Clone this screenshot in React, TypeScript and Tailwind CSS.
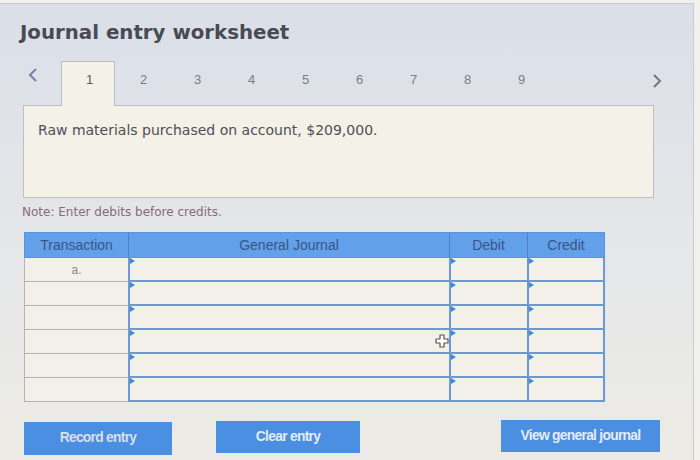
import React from 'react';

const tabs = [1, 2, 3, 4, 5, 6, 7, 8, 9];
const rows = ['a.', '', '', '', '', ''];

function Marker() {
  return (
    <span className="absolute left-0 top-0 w-0 h-0 border-t-[3px] border-b-[3px] border-l-[5px] border-t-transparent border-b-transparent border-l-[#4b82d6]" />
  );
}

function MoveCursor() {
  return (
    <svg className="absolute left-[-16px] top-[4px]" width="14" height="14" viewBox="0 0 14 14">
      <path
        d="M5 1h4v4h4v4H9v4H5V9H1V5h4z"
        fill="#ffffff"
        stroke="#555"
        strokeWidth="1.2"
        strokeLinejoin="round"
      />
    </svg>
  );
}

export default function App() {
  return (
    <div className="w-[700px] h-[460px] overflow-hidden flex bg-[#f1f0eb]" style={{ fontFamily: '"DejaVu Sans", Verdana, sans-serif' }}>
      <div className="flex-1 mt-[3px] border-t border-r border-[#c8ccd2] bg-gradient-to-b from-[#dadfe8] via-[#e5e6e9] to-[#ecebe5] flex flex-col">
        {/* Title */}
        <h1 className="pl-[20px] pt-[17px] text-[19.8px] font-bold text-[#4a4a54] leading-[24px]">
          Journal entry worksheet
        </h1>

        {/* Tabs */}
        <div className="mt-[16px] flex items-start h-[44px] pl-[28px] pr-[31px]" style={{ fontFamily: '"Liberation Sans", Arial, sans-serif' }}>
          <span className="w-[33px] pt-[6px] text-[#7a7fae]">
            <svg width="10" height="16" viewBox="0 0 10 16">
              <path d="M8 2L2 8l6 6" fill="none" stroke="currentColor" strokeWidth="2" />
            </svg>
          </span>
          {tabs.map((n) => (
            <div
              key={n}
              className={
                n === 1
                  ? 'w-[54px] h-[45px] bg-[#f3f1e8] border border-b-0 border-[#bdbdbd] text-center pt-[8px] pl-[3px] text-[13px] text-[#5a5a5a] relative z-10'
                  : 'w-[54px] h-[44px] text-center pt-[9px] pl-[3px] text-[13px] text-[#7d7d7d]'
              }
            >
              {n}
            </div>
          ))}
          <span className="ml-auto pt-[12px] text-[#777]">
            <svg width="10" height="16" viewBox="0 0 10 16">
              <path d="M2 2l6 6-6 6" fill="none" stroke="currentColor" strokeWidth="2" />
            </svg>
          </span>
        </div>

        {/* Question */}
        <div className="ml-[23px] w-[631px] h-[93px] bg-[#f3f1e8] border border-[#bfbfbf] px-[14px] pt-[14px] text-[14px] text-[#4f4f55]">
          Raw materials purchased on account, $209,000.
        </div>

        <p className="ml-[22px] mt-[5px] text-[12px] text-[#8a6c72]">Note: Enter debits before credits.</p>

        {/* Table */}
        <div className="ml-[24px] mt-[11px] w-[581px]" style={{ fontFamily: '"Liberation Sans", Arial, sans-serif' }}>
          <div className="flex h-[26px] bg-[#62a0ea] text-[14px] text-[#3a5584] border border-[#5b93dc]">
            <div className="w-[104px] flex items-center justify-center border-r border-[#4f7fc4]">Transaction</div>
            <div className="w-[321px] flex items-center justify-center border-r border-[#4f7fc4]">General Journal</div>
            <div className="w-[78px] flex items-center justify-center border-r border-[#4f7fc4]">Debit</div>
            <div className="flex-1 flex items-center justify-center">Credit</div>
          </div>
          {rows.map((t, i) => (
            <div key={i} className="flex h-[24px] bg-[#f2f0e8]">
              <div className="w-[104px] flex items-center justify-center border-l border-b border-[#b3b3b3] text-[12px] text-[#8a8a8a]">
                {t}
              </div>
              <div className="w-[321px] relative border-l-2 border-b-2 border-[#6a98d8]">
                <Marker />
              </div>
              <div className="w-[78px] relative border-l-2 border-b-2 border-[#6a98d8]">
                <Marker />
                {i === 3 && <MoveCursor />}
              </div>
              <div className="flex-1 relative border-l-2 border-r-2 border-b-2 border-[#6a98d8]">
                <Marker />
              </div>
            </div>
          ))}
        </div>

        {/* Buttons */}
        <div className="mt-auto mb-[6px] flex items-end pl-[24px] text-[13.8px] font-bold tracking-[-0.7px] text-[#e6ebf5]" style={{ fontFamily: '"Liberation Sans", Arial, sans-serif' }}>
          <button className="w-[148px] h-[33px] bg-[#4a8fe2] text-[#d9dfea] mb-[-1px]">Record entry</button>
          <button className="ml-[44px] w-[144px] h-[32px] bg-[#4a8fe2] mb-[1px]">Clear entry</button>
          <button className="ml-[141px] w-[159px] h-[32px] bg-[#4a8fe2] mb-[2px]">View general journal</button>
        </div>
      </div>
      <div className="w-[6px]" />
    </div>
  );
}
